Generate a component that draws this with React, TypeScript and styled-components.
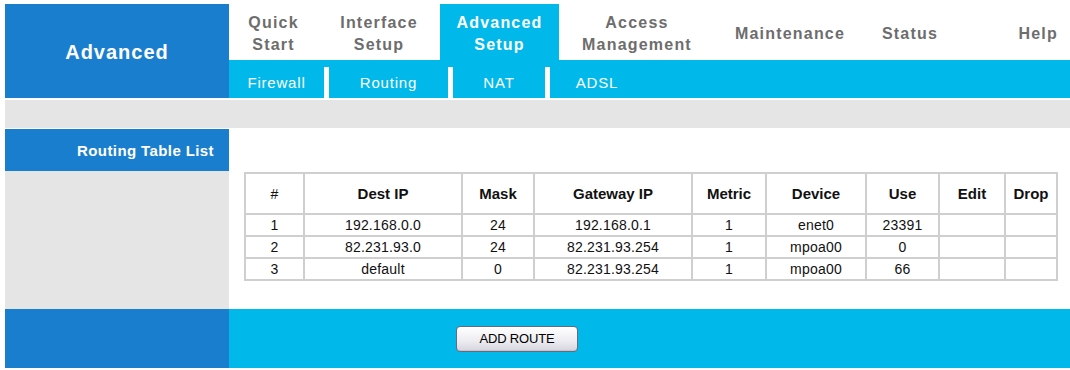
import React from "react";
import styled, { createGlobalStyle } from "styled-components";

const BLUE = "#1a7ecf";
const CYAN = "#00b9ea";
const GRAY = "#e5e5e5";

const Global = createGlobalStyle`
  html, body { margin: 0; padding: 0; background: #fff; overflow: hidden; }
  body { font-family: "Liberation Sans", Arial, sans-serif; }
`;

const Page = styled.div`
  width: 1065px;
  margin: 4px 0 0 5px;
  display: flex;
  flex-direction: column;
`;

const Header = styled.div`
  display: grid;
  grid-template-columns: 224px 1fr;
  height: 94px;
`;

const Brand = styled.div`
  background: ${BLUE};
  color: #fff;
  font-weight: bold;
  font-size: 20px;
  letter-spacing: 1px;
  display: flex;
  align-items: center;
  justify-content: center;
  padding-top: 2px;
`;

const HeaderRight = styled.div`
  display: flex;
  flex-direction: column;
`;

const NavRow = styled.div`
  height: 56px;
  display: flex;
`;

const NavItem = styled.div<{ $w: number; $active?: boolean; $align?: "center" | "right" }>`
  width: ${(p) => p.$w}px;
  flex: none;
  display: flex;
  align-items: center;
  justify-content: ${(p) => (p.$align === "right" ? "flex-end" : "center")};
  padding-right: ${(p) => (p.$align === "right" ? "12px" : "0")};
  box-sizing: border-box;
  text-align: center;
  background: ${(p) => (p.$active ? CYAN : "transparent")};
  color: ${(p) => (p.$active ? "#fff" : "#6d6d6d")};
  font-weight: bold;
  font-size: 16px;
  letter-spacing: 1.2px;
  line-height: 22px;
  padding-top: 3px;
`;

const SubNav = styled.div`
  height: 38px;
  background: ${CYAN};
  display: flex;
  align-items: flex-end;
`;

const SubItem = styled.div<{ $w: number }>`
  width: ${(p) => p.$w}px;
  height: 38px;
  flex: none;
  display: flex;
  align-items: center;
  justify-content: center;
  padding-top: 6px;
  box-sizing: border-box;
  color: #fff;
  font-size: 15px;
  letter-spacing: 0.8px;
`;

const SubSep = styled.div`
  width: 5px;
  height: 31px;
  background: #fff;
  flex: none;
`;

const GrayBar = styled.div`
  height: 28px;
  background: ${GRAY};
  margin-top: 2px;
`;

const Content = styled.div`
  display: grid;
  grid-template-columns: 224px 1fr;
  grid-template-rows: 42px 138px 59px;
  margin-top: 1px;
`;

const TitleCell = styled.div`
  background: ${BLUE};
  color: #fff;
  font-weight: bold;
  font-size: 15px;
  letter-spacing: 0.4px;
  display: flex;
  align-items: center;
  justify-content: flex-end;
  padding-right: 15px;
`;

const Blank = styled.div`
  background: #fff;
`;

const SideCell = styled.div`
  background: ${GRAY};
`;

const TableArea = styled.div`
  padding: 1px 0 0 15px;
`;

const BottomLeft = styled.div`
  background: ${BLUE};
`;

const BottomRight = styled.div`
  background: ${CYAN};
  display: flex;
  align-items: center;
  padding-left: 227px;
`;

const Table = styled.table`
  border-collapse: collapse;
  width: 812px;
  table-layout: fixed;
  border: 2px solid #c8c8c8;
`;

const Th = styled.th`
  border: 2px solid #cfcfcf;
  height: 39px;
  padding: 0;
  font-size: 15px;
  font-weight: bold;
  color: #111;
  text-align: center;
`;

const Hash = styled(Th)`
  font-weight: normal;
  font-size: 14px;
`;

const Td = styled.td`
  border: 2px solid #cfcfcf;
  height: 20px;
  padding: 0;
  font-size: 14px;
  letter-spacing: 0.2px;
  color: #111;
  text-align: center;
  line-height: 18px;
`;

const Button = styled.button`
  width: 122px;
  height: 26px;
  font-family: "Liberation Sans", Arial, sans-serif;
  font-size: 13px;
  color: #000;
  letter-spacing: -0.2px;
  border: 1px solid #6a6a7a;
  border-radius: 4px;
  background: linear-gradient(#ffffff, #ecebf0 60%, #d6d5df);
  box-shadow: inset 0 -1px 0 #c4c3cf;
  padding: 0;
`;

const navItems: { label: React.ReactNode; w: number; active?: boolean; align?: "center" | "right" }[] = [
  { label: <>Quick<br />Start</>, w: 89 },
  { label: <>Interface<br />Setup</>, w: 122 },
  { label: <>Advanced<br />Setup</>, w: 119, active: true },
  { label: <>Access<br />Management</>, w: 156 },
  { label: "Maintenance", w: 150 },
  { label: "Status", w: 90 },
  { label: "Help", w: 115, align: "right" },
];

const subItems = [
  { label: "Firewall", w: 95 },
  { label: "Routing", w: 119 },
  { label: "NAT", w: 92 },
  { label: "ADSL", w: 94 },
];

const colWidths = [59, 158, 72, 158, 74, 100, 73, 66, 52];
const headers = ["Dest IP", "Mask", "Gateway IP", "Metric", "Device", "Use", "Edit", "Drop"];
const rows = [
  ["1", "192.168.0.0", "24", "192.168.0.1", "1", "enet0", "23391", "", ""],
  ["2", "82.231.93.0", "24", "82.231.93.254", "1", "mpoa00", "0", "", ""],
  ["3", "default", "0", "82.231.93.254", "1", "mpoa00", "66", "", ""],
];

export default function App() {
  return (
    <>
      <Global />
      <Page>
        <Header>
          <Brand>Advanced</Brand>
          <HeaderRight>
            <NavRow>
              {navItems.map((n, i) => (
                <NavItem key={i} $w={n.w} $active={n.active} $align={n.align}>
                  <span>{n.label}</span>
                </NavItem>
              ))}
            </NavRow>
            <SubNav>
              {subItems.map((s, i) => (
                <React.Fragment key={s.label}>
                  {i > 0 && <SubSep />}
                  <SubItem $w={s.w}>{s.label}</SubItem>
                </React.Fragment>
              ))}
            </SubNav>
          </HeaderRight>
        </Header>
        <GrayBar />
        <Content>
          <TitleCell>Routing Table List</TitleCell>
          <Blank />
          <SideCell />
          <TableArea>
            <Table>
              <colgroup>
                {colWidths.map((w, i) => (
                  <col key={i} style={{ width: w }} />
                ))}
              </colgroup>
              <thead>
                <tr>
                  <Hash>#</Hash>
                  {headers.map((h) => (
                    <Th key={h}>{h}</Th>
                  ))}
                </tr>
              </thead>
              <tbody>
                {rows.map((r) => (
                  <tr key={r[0]}>
                    {r.map((c, i) => (
                      <Td key={i}>{c}</Td>
                    ))}
                  </tr>
                ))}
              </tbody>
            </Table>
          </TableArea>
          <BottomLeft />
          <BottomRight>
            <Button>ADD ROUTE</Button>
          </BottomRight>
        </Content>
      </Page>
    </>
  );
}
